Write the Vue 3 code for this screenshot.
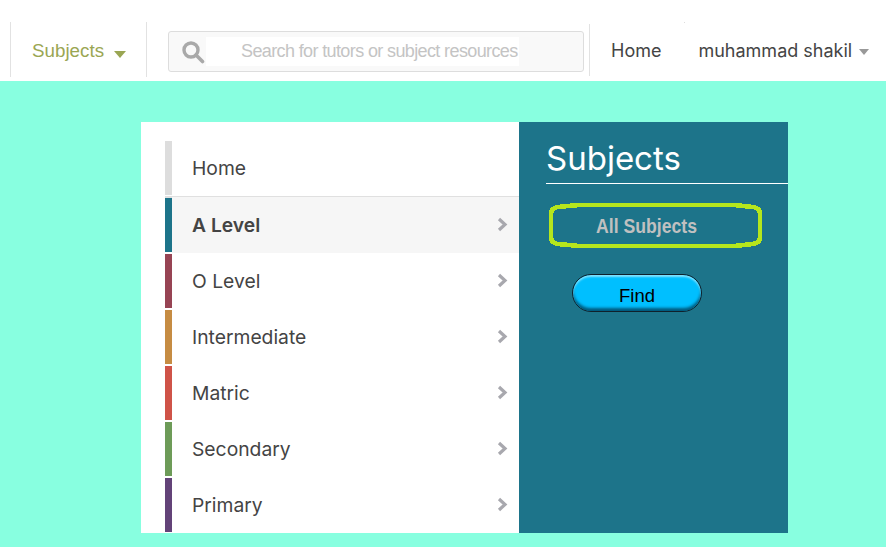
<script setup>
const rows = [
  { label: 'A Level', color: '#1d748a', active: true },
  { label: 'O Level', color: '#974454' },
  { label: 'Intermediate', color: '#c68c43' },
  { label: 'Matric', color: '#cf5348' },
  { label: 'Secondary', color: '#6d9b58' },
  { label: 'Primary', color: '#634378' },
]
</script>

<template>
  <div class="page">
    <header class="top">
      <div class="subjects-nav">
        <span>Subjects</span>
        <i class="caret green"></i>
      </div>
      <div class="search-zone">
        <div class="search">
          <svg class="glass" width="24" height="24" viewBox="0 0 24 24">
            <circle cx="10" cy="10" r="7" fill="none" stroke="#a9a9a9" stroke-width="3.4" />
            <path d="M15 15 L21.5 21.5" stroke="#a9a9a9" stroke-width="3.6" stroke-linecap="round" />
          </svg>
          <div class="field">Search for tutors or subject resources</div>
        </div>
      </div>
      <nav class="right-nav">
        <span class="home">Home</span>
        <span class="user">muhammad shakil</span>
        <i class="caret grey"></i>
      </nav>
      <i class="speck"></i>
    </header>

    <main class="stage">
      <section class="panel">
        <div class="menu">
          <div class="row first">
            <i class="stripe" style="background: #dddddd"></i>
            <span class="label">Home</span>
          </div>
          <div v-for="r in rows" :key="r.label" class="row" :class="{ active: r.active }">
            <i class="stripe" :style="{ background: r.color }"></i>
            <span class="label">{{ r.label }}</span>
            <svg class="chev" width="11" height="15" viewBox="0 0 11 15">
              <path d="M2 2 L8 7.5 L2 13" fill="none" stroke="#a8a8ae" stroke-width="3.2" />
            </svg>
          </div>
        </div>
        <div class="side">
          <h2>Subjects</h2>
          <div class="oval">
            <svg class="ring" width="213" height="45" viewBox="0 0 213 45" shape-rendering="crispEdges">
              <path d="M30 2 H185 L204 4 Q211 5 211 11 V34 Q211 40 204 41 L185 43 H30 L9 41 Q2 40 2 34 V11 Q2 5 9 4 Z" fill="none" stroke="#b5e61d" stroke-width="4.6" />
            </svg>
            <span>All Subjects</span>
          </div>
          <button class="find" type="button">Find</button>
        </div>
      </section>
    </main>
  </div>
</template>

<style>
html, body { margin: 0; background: #fff; }
</style>

<style scoped>
.page {
  width: 886px;
  height: 547px;
  overflow: hidden;
  display: flex;
  flex-direction: column;
  font-family: "Inter", "Liberation Sans", sans-serif;
  color: #444;
}
.top {
  position: relative;
  height: 81px;
  flex: none;
  display: flex;
  background: #fff;
  box-sizing: border-box;
  padding: 22px 0 4px 10px;
}
.subjects-nav {
  width: 137px;
  box-sizing: border-box;
  border-left: 1px solid #e2e2e2;
  border-right: 1px solid #e2e2e2;
  padding: 17px 0 0 21px;
  font: 18.8px/24px "Liberation Sans", sans-serif;
  color: #9aa653;
  display: flex;
  align-items: flex-start;
  gap: 10px;
}
.caret {
  display: block;
  width: 0;
  height: 0;
  border-left: 6px solid transparent;
  border-right: 6px solid transparent;
}
.caret.green { border-top: 7px solid #9aa653; margin-top: 12px; }
.caret.grey { border-top: 6px solid #999; border-left-width: 5px; border-right-width: 5px; margin: 10px 0 0 7px; }
.search-zone {
  width: 443px;
  box-sizing: border-box;
  padding: 9px 0 0 21px;
  border-right: 1px solid #e2e2e2;
  margin-top: 2px;
  height: 52px;
}
.search {
  width: 416px;
  height: 41px;
  margin-top: -2px;
  box-sizing: border-box;
  border: 1px solid #ddd;
  border-radius: 3px;
  background: #f9f9f9;
  display: flex;
  align-items: center;
  padding-left: 12px;
}
.glass { flex: none; margin-right: 1px; }
.field {
  width: 313px;
  height: 29px;
  background: #fff;
  box-sizing: border-box;
  padding-left: 35px;
  font: 18px/29px "Liberation Sans", sans-serif;
  letter-spacing: -0.62px;
  color: #c4c4c4;
  white-space: nowrap;
}
.right-nav {
  display: flex;
  align-items: flex-start;
  padding: 17px 0 0 21px;
  font-size: 18px;
  line-height: 24px;
  color: #444;
}
.home { margin-right: 37px; }
.speck {
  position: absolute;
  left: 684px;
  top: 22px;
  width: 1px;
  height: 1px;
  background: #ddd;
}
.stage {
  flex: 1;
  background: #88ffe0;
  padding: 41px 0 0 141px;
}
.panel {
  width: 647px;
  height: 411px;
  display: flex;
  overflow: hidden;
}
.menu {
  width: 378px;
  flex: none;
  box-sizing: border-box;
  background: #fff;
  padding: 19px 0 0 24px;
}
.row {
  height: 56px;
  display: flex;
  align-items: flex-start;
  position: relative;
  padding-right: 11px;
}
.row.first {
  height: 57px;
  border-bottom: 2px solid #e0e0e0;
  box-sizing: border-box;
}
.stripe {
  flex: none;
  width: 7px;
  height: 54px;
  margin-right: 20px;
}
.label {
  flex: 1;
  font-size: 19.3px;
  line-height: 26px;
  margin-top: 14px;
}
.row.active .label { font-weight: 600; }
.row.active::before {
  content: "";
  position: absolute;
  left: 7px;
  right: 0;
  top: -1px;
  bottom: 1px;
  background: #f6f6f6;
  z-index: 0;
}
.row > * { position: relative; z-index: 1; }
.chev { flex: none; margin-top: 19px; }
.side {
  flex: 1;
  background: #1d748a;
  padding: 15px 0 0 27px;
  display: flex;
  flex-direction: column;
  align-items: flex-start;
}
h2 {
  margin: 0;
  align-self: stretch;
  font-size: 33px;
  line-height: 42px;
  font-weight: 400;
  color: #fff;
  height: 47px;
  box-sizing: border-box;
  border-bottom: 1px solid #fff;
}
.oval {
  position: relative;
  margin: 19px 0 0 3px;
  width: 213px;
  height: 45px;
  box-sizing: border-box;
  font: 700 21px/45px "Liberation Sans", sans-serif;
  color: #c0c0c0;
  padding-left: 47px;
  white-space: nowrap;
}
.ring { position: absolute; left: 0; top: 0; }
.oval span {
  display: inline-block;
  transform: scaleX(0.84);
  transform-origin: left center;
}
.find {
  margin: 26px 0 0 26px;
  width: 130px;
  height: 38px;
  box-sizing: border-box;
  border: 1px solid #10202a;
  border-radius: 19px;
  background: #00bfff;
  box-shadow: inset 0 2px 2px #7fe2ff, inset 0 -3px 3px #00597c;
  color: #000;
  font: 18.5px/36px "Liberation Sans", sans-serif;
  padding: 3px 0 0;
}
</style>
